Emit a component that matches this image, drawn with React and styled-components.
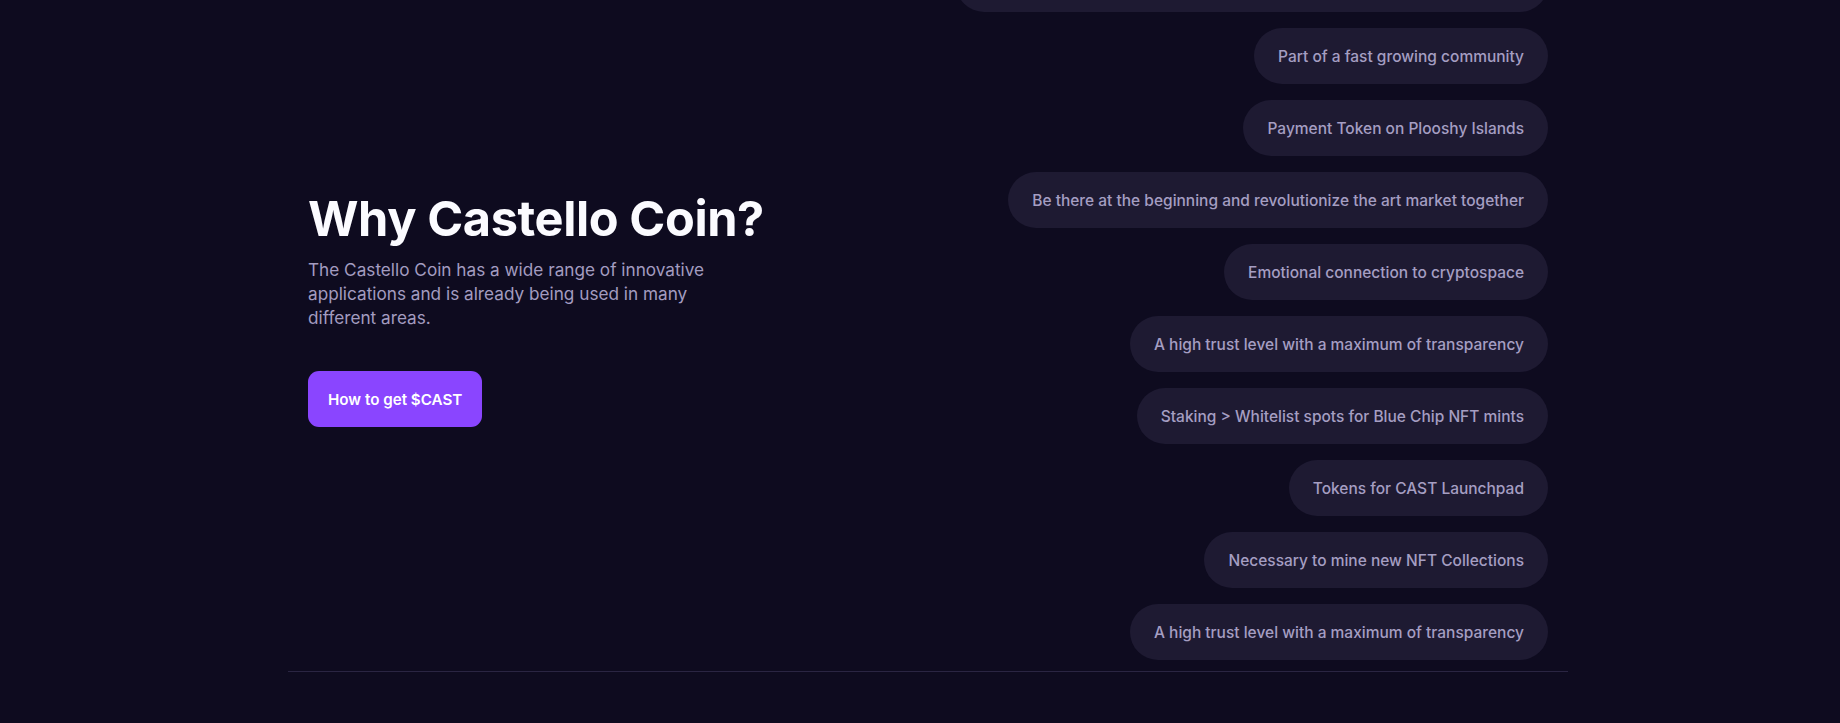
import React from "react";
import styled, { createGlobalStyle } from "styled-components";

const GlobalStyle = createGlobalStyle`
  * { box-sizing: border-box; }
  html, body {
    margin: 0;
    background: #0e0b1f;
    height: 723px;
    overflow: hidden;
  }
  body {
    padding-left: 16px;
    font-family: Inter, "Noto Sans", sans-serif;
    -webkit-font-smoothing: antialiased;
  }
`;

const Section = styled.section`
  max-width: 1280px;
  margin: -44px auto 0;
  border-bottom: 1px solid #2a2542;
`;

const Inner = styled.div`
  display: flex;
  align-items: center;
  justify-content: space-between;
  padding: 0 20px 11px;
`;

const Intro = styled.div`
  display: flex;
  flex-direction: column;
  align-items: flex-start;
  width: 460px;
`;

const Title = styled.h2`
  margin: 0 0 9px;
  color: #fbfbff;
  font-size: 48.7px;
  line-height: 60px;
  font-weight: 700;
  letter-spacing: -0.4px;
  white-space: nowrap;
`;

const Lead = styled.p`
  margin: 0;
  color: #a39cc0;
  font-size: 17.2px;
  line-height: 24px;
  max-width: 410px;
`;

const CtaButton = styled.a`
  display: inline-flex;
  align-items: center;
  justify-content: center;
  margin-top: 41px;
  height: 56px;
  padding: 0 20px;
  border-radius: 11px;
  background: #8a45ff;
  color: #ffffff;
  font-size: 15.2px;
  font-weight: 600;
  text-decoration: none;
`;

const PillList = styled.ul`
  list-style: none;
  margin: 0;
  padding: 0;
  display: flex;
  flex-direction: column;
  align-items: flex-end;
  gap: 16px;
`;

const Pill = styled.li`
  display: flex;
  align-items: center;
  height: 56px;
  padding: 0 24px;
  border-radius: 28px;
  background: #1e1a32;
  color: #a59ec2;
  font-size: 15.5px;
  font-weight: 500;
  white-space: nowrap;
`;

const reasons = [
  "Access to exclusive NFT drops, events and the whole Castello ecosystem",
  "Part of a fast growing community",
  "Payment Token on Plooshy Islands",
  "Be there at the beginning and revolutionize the art market together",
  "Emotional connection to cryptospace",
  "A high trust level with a maximum of transparency",
  "Staking > Whitelist spots for Blue Chip NFT mints",
  "Tokens for CAST Launchpad",
  "Necessary to mine new NFT Collections",
  "A high trust level with a maximum of transparency",
];

export default function App() {
  return (
    <>
      <GlobalStyle />
      <Section>
        <Inner>
          <Intro>
            <Title>Why Castello Coin?</Title>
            <Lead>
              The Castello Coin has a wide range of innovative applications and
              is already being used in many different areas.
            </Lead>
            <CtaButton href="#">How to get $CAST</CtaButton>
          </Intro>
          <PillList>
            {reasons.map((r, i) => (
              <Pill key={i}>{r}</Pill>
            ))}
          </PillList>
        </Inner>
      </Section>
    </>
  );
}
